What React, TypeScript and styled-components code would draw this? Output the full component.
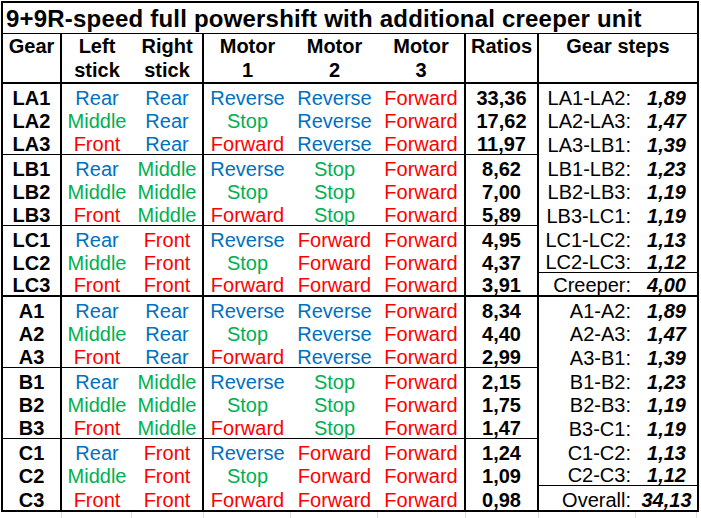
import React from "react";
import styled, { createGlobalStyle, css } from "styled-components";

const GlobalStyle = createGlobalStyle`
  html, body { margin: 0; padding: 0; background: #ffffff; }
  body { font-family: "Liberation Sans", Arial, Helvetica, sans-serif; color: #000; }
`;

const COLS = "59px 70px 72px 87px 87px 88px 73px 97px 61px";

const Page = styled.div`
  padding: 1px 0 0 1px;
`;

const Sheet = styled.div`
  display: grid;
  grid-template-columns: ${COLS};
  grid-template-rows: 31px 50px repeat(18, 23.667px);
  width: max-content;
  border: 2px solid #000;
  font-size: 20px;
`;

const Title = styled.div`
  grid-column: 1 / -1;
  box-sizing: border-box;
  border-bottom: 1px solid #000;
  padding: 1px 0 0 3px;
  font-size: 24px;
  line-height: 29px;
  font-weight: bold;
  letter-spacing: 0.2px;
  white-space: nowrap;
`;

const HeadCell = styled.div<{ $divider?: boolean; $span?: number }>`
  box-sizing: border-box;
  grid-column: span ${(p) => p.$span ?? 1};
  border-bottom: 2px solid #000;
  border-right: ${(p) => (p.$divider ? "2px solid #000" : "none")};
  text-align: center;
  font-weight: bold;
  line-height: 24px;
  white-space: nowrap;
`;

const BodyCell = styled.div<{ $sep: number; $divider?: boolean }>`
  box-sizing: border-box;
  display: flex;
  align-items: flex-end;
  justify-content: center;
  line-height: 20px;
  white-space: nowrap;
  border-bottom: ${(p) => (p.$sep ? `${p.$sep}px solid #000` : "none")};
  border-right: ${(p) => (p.$divider ? "2px solid #000" : "none")};
`;

const GearCell = styled(BodyCell)`
  font-weight: bold;
`;

const tones = {
  blue: "#0070C0",
  green: "#00B050",
  red: "#FF0000",
} as const;

type Tone = keyof typeof tones;

const PositionCell = styled(BodyCell)<{ $tone: Tone }>`
  color: ${(p) => tones[p.$tone]};
`;

const RatioCell = styled(BodyCell)`
  font-weight: bold;
`;

const StepLabel = styled(BodyCell)`
  justify-content: flex-end;
  padding-right: 5px;
`;

const StepValue = styled(BodyCell)`
  font-weight: bold;
  font-style: italic;
`;

const Gridlines = styled.div`
  display: grid;
  grid-template-columns: ${COLS};
  height: 6px;
  padding-left: 2px;
`;

const GridGap = styled.div<{ $first?: boolean }>`
  box-sizing: border-box;
  border-right: 1px solid #dcdcdc;
  ${(p) =>
    p.$first &&
    css`
      border-left: 1px solid #dcdcdc;
    `}
`;

const toneOf = (v: string): Tone => {
  if (v === "Rear" || v === "Reverse") return "blue";
  if (v === "Middle" || v === "Stop") return "green";
  return "red";
};

type Row = [string, string, string, string, string, string, string, string, string];

const rows: Row[] = [
  ["LA1", "Rear", "Rear", "Reverse", "Reverse", "Forward", "33,36", "LA1-LA2:", "1,89"],
  ["LA2", "Middle", "Rear", "Stop", "Reverse", "Forward", "17,62", "LA2-LA3:", "1,47"],
  ["LA3", "Front", "Rear", "Forward", "Reverse", "Forward", "11,97", "LA3-LB1:", "1,39"],
  ["LB1", "Rear", "Middle", "Reverse", "Stop", "Forward", "8,62", "LB1-LB2:", "1,23"],
  ["LB2", "Middle", "Middle", "Stop", "Stop", "Forward", "7,00", "LB2-LB3:", "1,19"],
  ["LB3", "Front", "Middle", "Forward", "Stop", "Forward", "5,89", "LB3-LC1:", "1,19"],
  ["LC1", "Rear", "Front", "Reverse", "Forward", "Forward", "4,95", "LC1-LC2:", "1,13"],
  ["LC2", "Middle", "Front", "Stop", "Forward", "Forward", "4,37", "LC2-LC3:", "1,12"],
  ["LC3", "Front", "Front", "Forward", "Forward", "Forward", "3,91", "Creeper:", "4,00"],
  ["A1", "Rear", "Rear", "Reverse", "Reverse", "Forward", "8,34", "A1-A2:", "1,89"],
  ["A2", "Middle", "Rear", "Stop", "Reverse", "Forward", "4,40", "A2-A3:", "1,47"],
  ["A3", "Front", "Rear", "Forward", "Reverse", "Forward", "2,99", "A3-B1:", "1,39"],
  ["B1", "Rear", "Middle", "Reverse", "Stop", "Forward", "2,15", "B1-B2:", "1,23"],
  ["B2", "Middle", "Middle", "Stop", "Stop", "Forward", "1,75", "B2-B3:", "1,19"],
  ["B3", "Front", "Middle", "Forward", "Stop", "Forward", "1,47", "B3-C1:", "1,19"],
  ["C1", "Rear", "Front", "Reverse", "Forward", "Forward", "1,24", "C1-C2:", "1,13"],
  ["C2", "Middle", "Front", "Stop", "Forward", "Forward", "1,09", "C2-C3:", "1,12"],
  ["C3", "Front", "Front", "Forward", "Forward", "Forward", "0,98", "Overall:", "34,13"],
];

const mainSep = (i: number) => (i === 8 ? 2 : [2, 5, 11, 14].includes(i) ? 1 : 0);
const stepSep = (i: number) => (i === 8 ? 2 : [7, 16].includes(i) ? 1 : 0);

export default function App() {
  return (
    <Page>
      <GlobalStyle />
      <Sheet>
        <Title>9+9R-speed full powershift with additional creeper unit</Title>
        <HeadCell $divider>Gear</HeadCell>
        <HeadCell>
          Left
          <br />
          stick
        </HeadCell>
        <HeadCell $divider>
          Right
          <br />
          stick
        </HeadCell>
        <HeadCell>
          Motor
          <br />1
        </HeadCell>
        <HeadCell>
          Motor
          <br />2
        </HeadCell>
        <HeadCell $divider>
          Motor
          <br />3
        </HeadCell>
        <HeadCell $divider>Ratios</HeadCell>
        <HeadCell $span={2}>Gear steps</HeadCell>
        {rows.map((r, i) => {
          const s = mainSep(i);
          const ss = stepSep(i);
          return (
            <React.Fragment key={r[0]}>
              <GearCell $sep={s} $divider>
                {r[0]}
              </GearCell>
              <PositionCell $sep={s} $tone={toneOf(r[1])}>
                {r[1]}
              </PositionCell>
              <PositionCell $sep={s} $tone={toneOf(r[2])} $divider>
                {r[2]}
              </PositionCell>
              <PositionCell $sep={s} $tone={toneOf(r[3])}>
                {r[3]}
              </PositionCell>
              <PositionCell $sep={s} $tone={toneOf(r[4])}>
                {r[4]}
              </PositionCell>
              <PositionCell $sep={s} $tone={toneOf(r[5])} $divider>
                {r[5]}
              </PositionCell>
              <RatioCell $sep={s} $divider>
                {r[6]}
              </RatioCell>
              <StepLabel $sep={ss}>{r[7]}</StepLabel>
              <StepValue $sep={ss}>{r[8]}</StepValue>
            </React.Fragment>
          );
        })}
      </Sheet>
      <Gridlines>
        {Array.from({ length: 9 }).map((_, i) => (
          <GridGap key={i} />
        ))}
      </Gridlines>
    </Page>
  );
}
